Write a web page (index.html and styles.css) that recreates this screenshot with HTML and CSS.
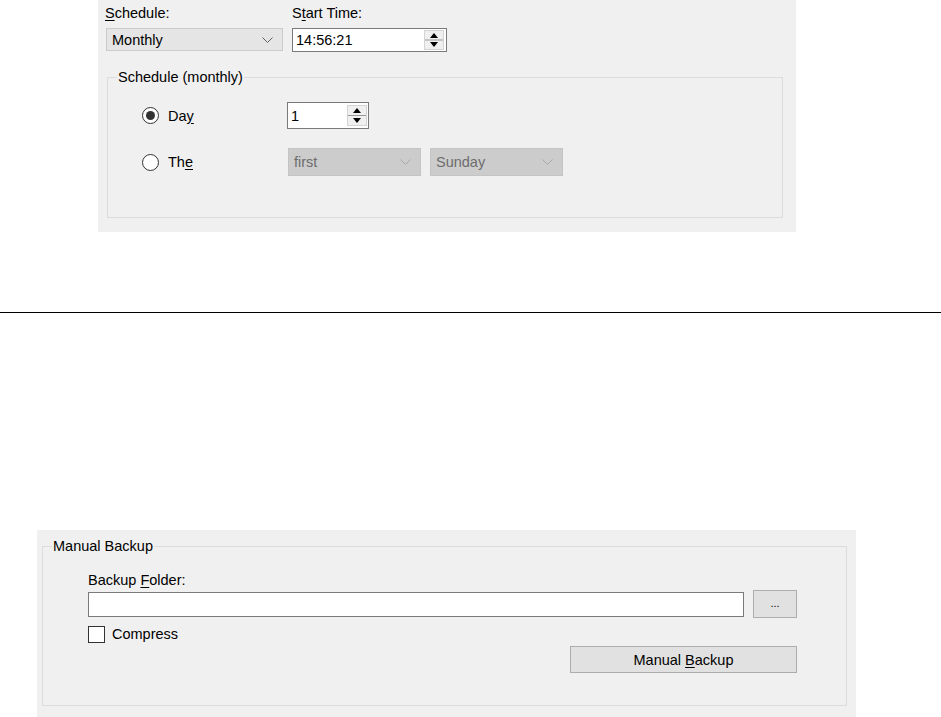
FILE: index.html
```html
<!DOCTYPE html>
<html>
<head>
<meta charset="utf-8">
<link rel="stylesheet" href="styles.css">
</head>
<body>
<div class="top-panel">
  <div class="fields">
    <div class="field f-schedule">
      <div class="label"><u>S</u>chedule:</div>
      <div class="combo">
        <span class="combo-text">Monthly</span>
        <svg class="chev" width="11" height="6" viewBox="0 0 11 6"><path d="M0.5 0.5 L5.5 5.5 L10.5 0.5" fill="none" stroke="#606060" stroke-width="1"/></svg>
      </div>
    </div>
    <div class="field f-time">
      <div class="label">S<u>t</u>art Time:</div>
      <div class="spinbox time">
        <span class="spin-text">14:56:21</span>
        <svg class="spin" width="20" height="20" viewBox="0 0 20 20"><rect x="0.5" y="0.5" width="19" height="19" fill="#f0f0f0" stroke="#d4d4d4"/><line x1="1" y1="10" x2="19" y2="10" stroke="#9a9a9a"/><path d="M10 3 L14 8 L6 8 Z" fill="#000"/><path d="M6 12 L14 12 L10 17 Z" fill="#000"/></svg>
      </div>
    </div>
  </div>
  <fieldset class="group g-monthly">
    <legend>Schedule (monthly)</legend>
    <div class="opt-row">
      <div class="radio-col">
        <span class="radio checked"></span>
        <span class="opt-label">Da<u>y</u></span>
      </div>
      <div class="spinbox day">
        <span class="spin-text">1</span>
        <svg class="spin" width="20" height="21" viewBox="0 0 20 21"><rect x="0.5" y="0.5" width="19" height="20" fill="#f0f0f0" stroke="#d4d4d4"/><line x1="1" y1="10.5" x2="19" y2="10.5" stroke="#9a9a9a"/><path d="M10 3 L14 8 L6 8 Z" fill="#000"/><path d="M6 13 L14 13 L10 18 Z" fill="#000"/></svg>
      </div>
    </div>
    <div class="opt-row second">
      <div class="radio-col">
        <span class="radio"></span>
        <span class="opt-label">Th<u>e</u></span>
      </div>
      <div class="combo disabled c-first">
        <span class="combo-text">first</span>
        <svg class="chev" width="11" height="6" viewBox="0 0 11 6"><path d="M0.5 0.5 L5.5 5.5 L10.5 0.5" fill="none" stroke="#a8a8a8" stroke-width="1"/></svg>
      </div>
      <div class="combo disabled c-day">
        <span class="combo-text">Sunday</span>
        <svg class="chev" width="11" height="6" viewBox="0 0 11 6"><path d="M0.5 0.5 L5.5 5.5 L10.5 0.5" fill="none" stroke="#a8a8a8" stroke-width="1"/></svg>
      </div>
    </div>
  </fieldset>
</div>

<div class="rule"></div>

<div class="bottom-panel">
  <fieldset class="group g-manual">
    <legend>Manual Backup</legend>
    <div class="manual-body">
      <div class="label">Backup <u>F</u>older:</div>
      <div class="folder-row">
        <div class="textbox"></div>
        <div class="btn browse"><span>...</span></div>
      </div>
      <div class="check-row">
        <span class="checkbox"></span>
        <span class="check-label">Compress</span>
      </div>
      <div class="btn-row">
        <div class="btn backup"><span>Manual <u>B</u>ackup</span></div>
      </div>
    </div>
  </fieldset>
</div>
</body>
</html>
```

FILE: styles.css
```css
* { box-sizing: border-box; }
html, body { margin: 0; padding: 0; background: #ffffff; }
body {
  font-family: "Liberation Sans", Arial, sans-serif;
  font-size: 14.5px;
  color: #000;
  width: 941px;
  height: 717px;
  overflow: hidden;
}
u { text-decoration: underline; text-underline-offset: 2px; text-decoration-thickness: 1px; }

.top-panel {
  margin-left: 98px;
  width: 698px;
  height: 232px;
  background: #f0f0f0;
  padding-top: 3px;
}
.fields {
  display: flex;
  gap: 9px;
  padding-left: 8px;
}
.label { line-height: 20px; height: 20px; padding-left: 0; }
.f-schedule .label { margin-left: -1px; }
.field .label { margin-bottom: 5px; }

.combo {
  display: flex;
  align-items: center;
  justify-content: space-between;
  height: 23px;
  background: #e5e5e5;
  border: 1px solid #cbcbcb;
  padding: 0 9px 0 5px;
}
.f-schedule .combo { width: 177px; }
.combo.disabled { background: #cccccc; border-color: #c4c4c4; color: #6d6d6d; }
.combo-text { line-height: 20px; }
.chev { display: block; }

.spinbox {
  display: flex;
  align-items: center;
  justify-content: space-between;
  background: #fff;
  border: 1px solid #7a7a7a;
  padding: 0 1px 0 3px;
}
.spinbox.time { width: 155px; height: 24px; }
.spinbox.time .spin { margin-right: 1px; }
.spin { display: block; }
.spin-text { line-height: 20px; }

.group {
  margin: 0;
  border: 1px solid #dcdcdc;
  padding: 0 10px;
  min-width: 0;
}
.group legend {
  padding: 0 1px;
  line-height: 20px;
  margin-left: -1px;
}
.g-monthly {
  margin: 15px 0 0 9px;
  width: 676px;
  height: 151px;
}
.opt-row {
  display: flex;
  align-items: center;
  margin-left: 24px;
  margin-top: 15px;
  height: 27px;
}
.opt-row.second { margin-top: 19px; height: 28px; }
.radio-col {
  display: flex;
  align-items: center;
  width: 145px;
}
.radio {
  width: 17px;
  height: 17px;
  border-radius: 50%;
  border: 1px solid #333333;
  background: #ffffff;
  display: flex;
  align-items: center;
  justify-content: center;
  margin-right: 9px;
  flex: none;
}
.radio.checked::after {
  content: "";
  width: 9px;
  height: 9px;
  border-radius: 50%;
  background: #333333;
}
.spinbox.day { width: 82px; height: 27px; }
.combo.c-first { width: 133px; height: 28px; margin-left: 1px; }
.combo.c-day { width: 133px; height: 28px; margin-left: 9px; }

.rule {
  margin-top: 80px;
  height: 1px;
  background: #000;
  width: 941px;
}

.bottom-panel {
  margin: 217px 0 0 37px;
  width: 819px;
  height: 187px;
  background: #f0f0f0;
  padding-top: 6px;
  padding-left: 5px;
}
.g-manual {
  width: 805px;
  height: 170px;
}
.manual-body {
  margin-left: 35px;
  padding-top: 14px;
  width: 709px;
}
.manual-body .label { margin-bottom: 0; }
.folder-row {
  display: flex;
  align-items: center;
  gap: 9px;
  height: 28px;
}
.textbox {
  width: 656px;
  height: 25px;
  background: #fff;
  border: 1px solid #7a7a7a;
}
.btn {
  background: #e1e1e1;
  border: 1px solid #adadad;
  display: flex;
  align-items: center;
  justify-content: center;
}
.browse { width: 44px; height: 28px; font-size: 11px; padding-bottom: 2px; }
.check-row {
  display: flex;
  align-items: center;
  margin-top: 8px;
  height: 16px;
}
.checkbox {
  width: 17px;
  height: 17px;
  border: 1px solid #333333;
  background: #fff;
  margin-right: 7px;
}
.btn-row {
  display: flex;
  justify-content: flex-end;
  margin-top: 4px;
}
.backup { width: 227px; height: 27px; }
```
